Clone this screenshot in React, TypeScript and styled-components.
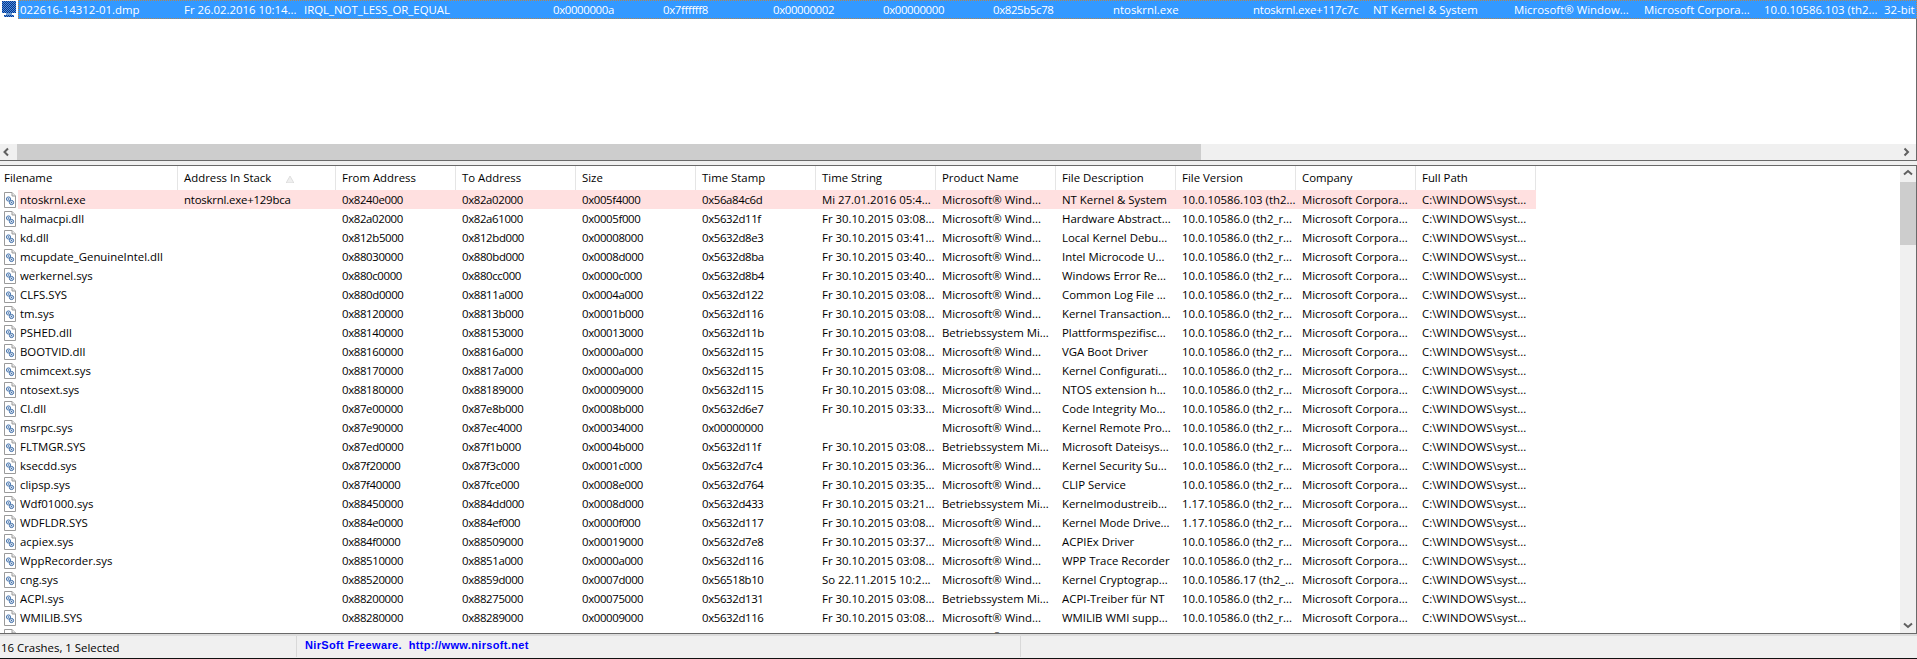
import React from "react";
import styled, { createGlobalStyle } from "styled-components";

const Global = createGlobalStyle`
  html, body { margin: 0; padding: 0; background: #fff; overflow: hidden; }
  body { font-family: "Open Sans", "Noto Sans", sans-serif; font-size: 11.4px; color: #000; }
`;

const Window = styled.div`
  width: 1917px;
  height: 659px;
  display: flex;
  flex-direction: column;
  overflow: hidden;
  background: #f0f0f0;
`;

const TopPane = styled.section`
  height: 161px;
  display: flex;
  flex-direction: column;
  background: #fff;
  border-right: 1px solid #696969;
  border-bottom: 1px solid #696969;
  box-sizing: border-box;
`;

const CrashList = styled.div`
  height: 144px;
  flex: none;
`;

const Row = styled.div`
  display: flex;
  height: 19px;
  flex: none;
`;

const IconSlot = styled.div`
  width: 18px;
  height: 19px;
  flex: none;
  display: flex;
  align-items: center;
  justify-content: flex-end;
  padding-right: 1px;
  box-sizing: border-box;
`;

const RowBody = styled.div<{ $tone?: "selected" | "flagged" }>`
  display: flex;
  flex: ${(p) => (p.$tone === "selected" ? "1" : "none")};
  box-sizing: border-box;
  height: 19px;
  background: ${(p) => (p.$tone === "selected" ? "#3399ff" : p.$tone === "flagged" ? "#ffe0e0" : "transparent")};
  color: ${(p) => (p.$tone === "selected" ? "#fff" : "#000")};
  ${(p) => (p.$tone === "selected" ? "outline: 1px dotted #b5854f; outline-offset: -1px;" : "")}
`;

const Cell = styled.div<{ $w: number; $pad?: number; $tight?: number }>`
  width: ${(p) => p.$w}px;
  flex: none;
  box-sizing: border-box;
  padding-left: ${(p) => p.$pad ?? 6}px;
  line-height: 19px;
  letter-spacing: ${(p) => p.$tight ?? 0}px;
  white-space: pre;
  overflow: hidden;
`;

const HScroll = styled.div`
  height: 16px;
  flex: none;
  display: flex;
  align-items: stretch;
  background: #f0f0f0;
`;

const HThumb = styled.div`
  width: 1184px;
  margin-left: 17px;
  background: #cdcdcd;
`;

const ArrowBtn = styled.div<{ $pos: "left" | "right" | "up" | "down" }>`
  flex: none;
  width: 16px;
  height: 16px;
  display: flex;
  align-items: center;
  justify-content: center;
  ${(p) => (p.$pos === "left" ? "position: absolute; left: 0;" : "")}
  ${(p) => (p.$pos === "right" ? "margin-left: auto;" : "")}
  ${(p) => (p.$pos === "down" ? "margin-top: auto;" : "")}
`;

const HScrollInner = styled.div`
  position: relative;
  display: flex;
  width: 100%;
`;

const Splitter = styled.div`
  height: 4px;
  flex: none;
  background: #f0f0f0;
`;

const BottomPane = styled.section`
  height: 469px;
  flex: none;
  box-sizing: border-box;
  display: flex;
  background: #fff;
  border-top: 1px solid #696969;
  border-bottom: 1px solid #696969;
  border-right: 1px solid #696969;
`;

const ModuleArea = styled.div`
  flex: 1;
  min-width: 0;
  overflow: hidden;
`;

const HeaderRow = styled.div`
  display: flex;
  height: 24px;
`;

const HeaderCell = styled.div<{ $w: number; $pad: number }>`
  width: ${(p) => p.$w}px;
  flex: none;
  box-sizing: border-box;
  padding-left: ${(p) => p.$pad}px;
  line-height: 24px;
  position: relative;
  border-right: 1px solid #e5e5e5;
  white-space: pre;
`;

const SortMark = styled.svg`
  position: absolute;
  left: 108px;
  top: 10px;
`;

const VScroll = styled.div`
  width: 16px;
  flex: none;
  display: flex;
  flex-direction: column;
  background: #f0f0f0;
`;

const VThumb = styled.div`
  height: 63px;
  flex: none;
  background: #cdcdcd;
`;

const StatusBar = styled.footer`
  flex: 1;
  display: flex;
  box-sizing: border-box;
  border-top: 2px solid #dcdcdc;
  border-bottom: 1px solid #111;
  background: #f0f0f0;
`;

const StatusCell = styled.div<{ $w: number }>`
  width: ${(p) => p.$w}px;
  flex: none;
  box-sizing: border-box;
  border-right: 1px solid #d9d9d9;
  padding: 3px 0 0 1px;
  line-height: 18px;
  margin-bottom: 1px;
  white-space: pre;
`;

const LinkCell = styled(StatusCell)`
  padding: 0 0 0 8px;
  line-height: 19px;
  color: #0000ff;
  font-family: "Liberation Sans", Arial, sans-serif;
  font-weight: 700;
  font-size: 11px;
  letter-spacing: 0.34px;
`;

const Chevron = ({ dir }: { dir: "left" | "right" | "up" | "down" }) => {
  const d = {
    left: "M7 3.5 L3.5 7 L7 10.5",
    right: "M3.5 3.5 L7 7 L3.5 10.5",
    up: "M3 7.5 L7 4 L11 7.5",
    down: "M3 5.5 L7 9 L11 5.5",
  }[dir];
  return (
    <svg width="14" height="14" viewBox="0 0 14 14" fill="none">
      <path d={d} stroke="#606060" strokeWidth="2" />
    </svg>
  );
};

const FileIcon = () => (
  <svg width="14" height="16" viewBox="0 0 14 16">
    <path d="M1.5 .5 H9 L12.5 4 V15.5 H1.5 Z" fill="#fff" stroke="#9a9a9a" />
    <path d="M9 .5 V4 H12.5" fill="#e8e8e8" stroke="#9a9a9a" />
    <circle cx="5.5" cy="7" r="2.1" fill="#dce6f2" stroke="#4a78b0" />
    <circle cx="8.5" cy="10.5" r="2.1" fill="#dce6f2" stroke="#3f6ea8" />
    <circle cx="5.5" cy="7" r=".7" fill="#3f6ea8" />
    <circle cx="8.5" cy="10.5" r=".7" fill="#3f6ea8" />
  </svg>
);

const DumpIcon = () => (
  <svg width="16" height="17" viewBox="0 0 16 17" shapeRendering="crispEdges">
    <defs>
      <pattern id="dither" width="2" height="2" patternUnits="userSpaceOnUse">
        <rect width="2" height="2" fill="#16347f" />
        <rect width="1" height="1" fill="#3f8fe8" />
        <rect x="1" y="1" width="1" height="1" fill="#3f8fe8" />
      </pattern>
    </defs>
    <rect x="1" y="0" width="14" height="12" fill="url(#dither)" />
    <rect x="5" y="12" width="6" height="2" fill="#6f9cd0" />
    <rect x="3" y="14" width="10" height="2" fill="url(#dither)" />
  </svg>
);

const topWidths = [178, 120, 249, 110, 110, 110, 110, 120, 140, 120, 141, 130, 120, 120, 39];
const topValues = [
  "022616-14312-01.dmp", "Fr 26.02.2016 10:14...", "IRQL_NOT_LESS_OR_EQUAL", "0x0000000a", "0x7ffffff8",
  "0x00000002", "0x00000000", "0x825b5c78", "ntoskrnl.exe", "ntoskrnl.exe+117c7c", "NT Kernel & System",
  "Microsoft® Window...", "Microsoft Corpora...", "10.0.10586.103 (th2...", "32-bit",
];

const moduleWidths = [178, 158, 120, 120, 120, 120, 120, 120, 120, 120, 120, 120];
const headers = [
  "Filename", "Address In Stack", "From Address", "To Address", "Size", "Time Stamp", "Time String",
  "Product Name", "File Description", "File Version", "Company", "Full Path",
];

const MS = "Microsoft® Wind...";
const BS = "Betriebssystem Mi...";
const V0 = "10.0.10586.0 (th2_r...";
const V1 = "1.17.10586.0 (th2_r...";
const t = (h: string) => `Fr 30.10.2015 ${h}...`;

const tightness = (v: string) => (v.startsWith("0x") ? -0.35 : v.includes("+1") ? -0.2 : 0);

const modules: string[][] = [
  ["ntoskrnl.exe", "ntoskrnl.exe+129bca", "0x8240e000", "0x82a02000", "0x005f4000", "0x56a84c6d", "Mi 27.01.2016 05:4...", MS, "NT Kernel & System", "10.0.10586.103 (th2..."],
  ["halmacpi.dll", "", "0x82a02000", "0x82a61000", "0x0005f000", "0x5632d11f", t("03:08"), MS, "Hardware Abstract...", V0],
  ["kd.dll", "", "0x812b5000", "0x812bd000", "0x00008000", "0x5632d8e3", t("03:41"), MS, "Local Kernel Debu...", V0],
  ["mcupdate_GenuineIntel.dll", "", "0x88030000", "0x880bd000", "0x0008d000", "0x5632d8ba", t("03:40"), MS, "Intel Microcode U...", V0],
  ["werkernel.sys", "", "0x880c0000", "0x880cc000", "0x0000c000", "0x5632d8b4", t("03:40"), MS, "Windows Error Re...", V0],
  ["CLFS.SYS", "", "0x880d0000", "0x8811a000", "0x0004a000", "0x5632d122", t("03:08"), MS, "Common Log File ...", V0],
  ["tm.sys", "", "0x88120000", "0x8813b000", "0x0001b000", "0x5632d116", t("03:08"), MS, "Kernel Transaction...", V0],
  ["PSHED.dll", "", "0x88140000", "0x88153000", "0x00013000", "0x5632d11b", t("03:08"), BS, "Plattformspezifisc...", V0],
  ["BOOTVID.dll", "", "0x88160000", "0x8816a000", "0x0000a000", "0x5632d115", t("03:08"), MS, "VGA Boot Driver", V0],
  ["cmimcext.sys", "", "0x88170000", "0x8817a000", "0x0000a000", "0x5632d115", t("03:08"), MS, "Kernel Configurati...", V0],
  ["ntosext.sys", "", "0x88180000", "0x88189000", "0x00009000", "0x5632d115", t("03:08"), MS, "NTOS extension h...", V0],
  ["CI.dll", "", "0x87e00000", "0x87e8b000", "0x0008b000", "0x5632d6e7", t("03:33"), MS, "Code Integrity Mo...", V0],
  ["msrpc.sys", "", "0x87e90000", "0x87ec4000", "0x00034000", "0x00000000", "", MS, "Kernel Remote Pro...", V0],
  ["FLTMGR.SYS", "", "0x87ed0000", "0x87f1b000", "0x0004b000", "0x5632d11f", t("03:08"), BS, "Microsoft Dateisys...", V0],
  ["ksecdd.sys", "", "0x87f20000", "0x87f3c000", "0x0001c000", "0x5632d7c4", t("03:36"), MS, "Kernel Security Su...", V0],
  ["clipsp.sys", "", "0x87f40000", "0x87fce000", "0x0008e000", "0x5632d764", t("03:35"), MS, "CLIP Service", V0],
  ["Wdf01000.sys", "", "0x88450000", "0x884dd000", "0x0008d000", "0x5632d433", t("03:21"), BS, "Kernelmodustreib...", V1],
  ["WDFLDR.SYS", "", "0x884e0000", "0x884ef000", "0x0000f000", "0x5632d117", t("03:08"), MS, "Kernel Mode Drive...", V1],
  ["acpiex.sys", "", "0x884f0000", "0x88509000", "0x00019000", "0x5632d7e8", t("03:37"), MS, "ACPIEx Driver", V0],
  ["WppRecorder.sys", "", "0x88510000", "0x8851a000", "0x0000a000", "0x5632d116", t("03:08"), MS, "WPP Trace Recorder", V0],
  ["cng.sys", "", "0x88520000", "0x8859d000", "0x0007d000", "0x56518b10", "So 22.11.2015 10:2...", MS, "Kernel Cryptograp...", "10.0.10586.17 (th2_..."],
  ["ACPI.sys", "", "0x88200000", "0x88275000", "0x00075000", "0x5632d131", t("03:08"), BS, "ACPI-Treiber für NT", V0],
  ["WMILIB.SYS", "", "0x88280000", "0x88289000", "0x00009000", "0x5632d116", t("03:08"), MS, "WMILIB WMI supp...", V0],
  ["WindowsTrustedRT.sys", "", "0x882a0000", "0x882b7000", "0x00017000", "0x5632d7b4", t("03:37"), MS, "Windows Trusted ...", V0],
];

export default function App() {
  return (
    <Window>
      <Global />
      <TopPane>
        <CrashList>
          <Row>
            <IconSlot>
              <DumpIcon />
            </IconSlot>
            <RowBody $tone="selected">
              {topValues.map((v, i) => (
                <Cell key={i} $w={i === 0 ? topWidths[0] - 18 : topWidths[i]} $pad={i === 0 ? 2 : 6} $tight={tightness(v)}>
                  {v}
                </Cell>
              ))}
            </RowBody>
          </Row>
        </CrashList>
        <HScroll>
          <HScrollInner>
            <ArrowBtn $pos="left">
              <Chevron dir="left" />
            </ArrowBtn>
            <HThumb />
            <ArrowBtn $pos="right">
              <Chevron dir="right" />
            </ArrowBtn>
          </HScrollInner>
        </HScroll>
      </TopPane>
      <Splitter />
      <BottomPane>
        <ModuleArea>
          <HeaderRow>
            {headers.map((h, i) => (
              <HeaderCell key={h} $w={moduleWidths[i]} $pad={i === 0 ? 4 : 6}>
                {h}
                {i === 1 && (
                  <SortMark width="8" height="7" viewBox="0 0 8 7">
                    <path d="M4 0 L8 7 H0 Z" fill="#efefef" stroke="#cfcfcf" strokeWidth=".6" />
                  </SortMark>
                )}
              </HeaderCell>
            ))}
          </HeaderRow>
          {modules.map((m, r) => (
            <Row key={m[0]}>
              <IconSlot>
                <FileIcon />
              </IconSlot>
              <RowBody $tone={r === 0 ? "flagged" : undefined}>
                {[...m, "Microsoft Corpora...", "C:\\WINDOWS\\syst..."].map((v, i) => (
                  <Cell key={i} $w={i === 0 ? moduleWidths[0] - 18 : moduleWidths[i]} $pad={i === 0 ? 2 : 6} $tight={tightness(v)}>
                    {v}
                  </Cell>
                ))}
              </RowBody>
            </Row>
          ))}
        </ModuleArea>
        <VScroll>
          <ArrowBtn $pos="up">
            <Chevron dir="up" />
          </ArrowBtn>
          <VThumb />
          <ArrowBtn $pos="down">
            <Chevron dir="down" />
          </ArrowBtn>
        </VScroll>
      </BottomPane>
      <StatusBar>
        <StatusCell $w={297}>16 Crashes, 1 Selected</StatusCell>
        <LinkCell $w={724}>{"NirSoft Freeware.  http://www.nirsoft.net"}</LinkCell>
      </StatusBar>
    </Window>
  );
}
